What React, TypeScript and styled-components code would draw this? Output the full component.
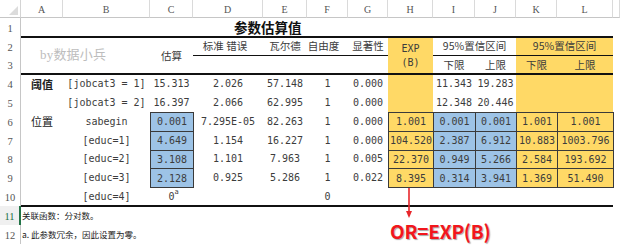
import React from 'react';
import styled, { createGlobalStyle, css } from 'styled-components';

const YELLOW = '#FFD966';
const BLUE = '#9DC3E6';
const INK = '#3c3c3c';
const LINE = '#3a3a3a';
const mono = `"DejaVu Sans Mono", "Liberation Mono", monospace`;
const cjk = `"Noto Sans CJK SC", "Noto Sans", sans-serif`;
const serif = `"Liberation Serif", serif`;

const Global = createGlobalStyle`
  html, body { margin: 0; padding: 0; background: #fff; }
  body { font-family: ${cjk}; }
`;

type Place = { $c: number; $r: number; $cs?: number; $rs?: number };
const place = css<Place>`
  grid-column: ${(p) => p.$c} / span ${(p) => p.$cs ?? 1};
  grid-row: ${(p) => p.$r} / span ${(p) => p.$rs ?? 1};
`;

const Sheet = styled.div`
  position: relative;
  width: 620px;
  height: 252px;
  overflow: hidden;
  display: grid;
  grid-template-columns: 21px 42px 87px 43px 70px 44px 41px 40px 45px 42px 41px 41px 56px 7px;
  grid-template-rows: 18px repeat(12, 18.8px) 1fr;
  background: #fff;
`;

const Corner = styled.div`
  grid-column: 1;
  grid-row: 1;
  border-right: 1px solid #d4d4d4;
  border-bottom: 1px solid #c6c6c6;
  display: flex;
  align-items: flex-end;
  justify-content: flex-end;
  padding: 0 2px 2px 0;
`;

const ColHead = styled.div<{ $c: number }>`
  grid-column: ${(p) => p.$c};
  grid-row: 1;
  display: flex;
  align-items: center;
  justify-content: center;
  border-right: 1px solid #dadada;
  border-bottom: 1px solid #c6c6c6;
  font: 10px ${serif};
  color: #555;
  padding-top: 2px;
`;

const RowHead = styled.div<{ $r: number; $active?: boolean }>`
  grid-column: 1;
  grid-row: ${(p) => p.$r};
  display: flex;
  align-items: center;
  justify-content: center;
  border-right: ${(p) => (p.$active ? '2px solid #217346' : '1px solid #c6c6c6')};
  font: 10.5px ${serif};
  color: ${(p) => (p.$active ? '#217346' : '#555')};
  background: ${(p) => (p.$active ? '#f0f0f0' : '#fff')};
  padding-top: 2px;
`;

type Fill = 'yellow' | 'blue' | undefined;
const Cell = styled.div<Place & { $fill?: Fill; $boxed?: boolean; $nudge?: number }>`
  ${place};
  display: flex;
  align-items: center;
  justify-content: center;
  white-space: nowrap;
  color: ${INK};
  padding-right: ${(p) => p.$nudge ?? 0}px;
  background: ${(p) => (p.$fill === 'yellow' ? YELLOW : p.$fill === 'blue' ? BLUE : 'transparent')};
  ${(p) =>
    p.$boxed &&
    css`
      border: 1px solid ${LINE};
      margin: 0 -1px -1px 0;
      z-index: 1;
    `}
`;

const Num = styled(Cell)`
  font: 10px ${mono};
`;

const Head = styled(Cell)`
  font: 10.5px ${cjk};
  flex-direction: column;
  line-height: 14px;
`;

const ExpHead = styled(Cell)`
  font: 10px ${mono};
  flex-direction: column;
  line-height: 14px;
`;

const Group = styled(Cell)<{ $strong?: boolean }>`
  font: ${(p) => (p.$strong ? 'bold' : 'normal')} 11px ${cjk};
  color: #222;
  justify-content: flex-start;
  padding-left: 10px;
`;

const Title = styled.div`
  grid-column: 2 / 14;
  grid-row: 2;
  display: flex;
  align-items: center;
  padding-left: 213px;
  font: bold 13.5px ${cjk};
  color: #111;
`;

const Note = styled.div<{ $r: number }>`
  grid-column: 2 / 14;
  grid-row: ${(p) => p.$r};
  display: flex;
  align-items: center;
  padding-left: 1px;
  font: 8.5px ${cjk};
  color: #222;
`;

const Rule = styled.div<{ $r: number; $from: number; $to: number; $w: number }>`
  grid-row: ${(p) => p.$r};
  grid-column: ${(p) => p.$from} / ${(p) => p.$to};
  align-self: end;
  height: ${(p) => p.$w}px;
  margin-bottom: ${(p) => (p.$w > 1 ? -1 : 0)}px;
  background: #111;
  z-index: 3;
`;

const Zero = styled.span`
  position: relative;
`;

const Sup = styled.span`
  position: absolute;
  left: 100%;
  top: -3px;
  font: 7px ${mono};
`;

const Watermark = styled.div`
  position: absolute;
  left: 40px;
  top: 44px;
  font: 13px ${serif}, ${cjk};
  color: #bdbdbd;
  letter-spacing: 0.2px;
`;

const Callout = styled.div`
  position: absolute;
  left: 390px;
  top: 188px;
  display: flex;
  flex-direction: column;
  align-items: flex-start;
  z-index: 5;
`;

const Arrow = styled.svg`
  margin-left: 14px;
  display: block;
`;

const CalloutText = styled.div`
  margin-top: 1px;
  font: bold 19px ${cjk};
  line-height: 22px;
  color: #f2161c;
  text-shadow: 1px 1px 1px rgba(0, 0, 0, 0.35);
  letter-spacing: -0.2px;
`;

const letters = ['A', 'B', 'C', 'D', 'E', 'F', 'G', 'H', 'I', 'J', 'K', 'L'];

type DataRow = {
  r: number;
  a?: string;
  strong?: boolean;
  b: string;
  v: string[];
  ci?: string[];
  exp?: string[];
};

const data: DataRow[] = [
  { r: 4, a: '阈值', strong: true, b: '[jobcat3 = 1]', v: ['15.313', '2.026', '57.148', '1', '0.000'], ci: ['11.343', '19.283'] },
  { r: 5, b: '[jobcat3 = 2]', v: ['16.397', '2.066', '62.995', '1', '0.000'], ci: ['12.348', '20.446'] },
  { r: 6, a: '位置', b: 'sabegin', v: ['0.001', '7.295E-05', '82.263', '1', '0.000'], exp: ['1.001', '0.001', '0.001', '1.001', '1.001'] },
  { r: 7, b: '[educ=1]', v: ['4.649', '1.154', '16.227', '1', '0.000'], exp: ['104.520', '2.387', '6.912', '10.883', '1003.796'] },
  { r: 8, b: '[educ=2]', v: ['3.108', '1.101', '7.963', '1', '0.005'], exp: ['22.370', '0.949', '5.266', '2.584', '193.692'] },
  { r: 9, b: '[educ=3]', v: ['2.128', '0.925', '5.286', '1', '0.022'], exp: ['8.395', '0.314', '3.941', '1.369', '51.490'] },
];

const expFill: Fill[] = ['yellow', 'blue', 'blue', 'yellow', 'yellow'];

export default function App() {
  return (
    <>
      <Global />
      <Sheet>
        <Corner>
          <svg width="9" height="9" viewBox="0 0 9 9">
            <polygon points="9,0 9,9 0,9" fill="#dcdcdc" />
          </svg>
        </Corner>
        {letters.map((l, i) => (
          <ColHead key={l} $c={i + 2}>
            {l}
          </ColHead>
        ))}
        <ColHead $c={14} />
        {Array.from({ length: 12 }, (_, i) => (
          <RowHead key={i} $r={i + 2} $active={i + 1 === 11}>
            {i + 1}
          </RowHead>
        ))}

        <Title>参数估算值</Title>

        <Head $c={4} $r={3} $rs={2}>
          估算
        </Head>
        <Head $c={5} $r={3} $nudge={6}>标准 错误</Head>
        <Head $c={6} $r={3}>瓦尔德</Head>
        <Head $c={7} $r={3} $nudge={8}>自由度</Head>
        <Head $c={8} $r={3}>显著性</Head>
        <ExpHead $c={9} $r={3} $rs={2} $fill="yellow">
          <span>EXP</span>
          <span>(B)</span>
        </ExpHead>
        <Head $c={10} $r={3} $cs={2}>95%置信区间</Head>
        <Head $c={12} $r={3} $cs={2} $fill="yellow">95%置信区间</Head>
        <Head $c={10} $r={4}>下限</Head>
        <Head $c={11} $r={4}>上限</Head>
        <Head $c={12} $r={4} $fill="yellow">下限</Head>
        <Head $c={13} $r={4} $fill="yellow">上限</Head>

        {data.map((row) => {
          const gr = row.r + 1;
          const boxedRow = !!row.exp;
          return (
            <React.Fragment key={row.r}>
              {row.a && (
                <Group $c={2} $r={gr} $strong={row.strong}>
                  {row.a}
                </Group>
              )}
              <Num $c={3} $r={gr}>{row.b}</Num>
              {row.v.map((v, i) => (
                <Num
                  key={i}
                  $c={4 + i}
                  $r={gr}
                  $fill={i === 0 && boxedRow ? 'blue' : undefined}
                  $boxed={i === 0 && boxedRow}
                >
                  {v}
                </Num>
              ))}
              {row.ci && (
                <>
                  <Num $c={9} $r={gr} $fill="yellow" />
                  <Num $c={10} $r={gr}>{row.ci[0]}</Num>
                  <Num $c={11} $r={gr}>{row.ci[1]}</Num>
                  <Num $c={12} $r={gr} $cs={2} $fill="yellow" />
                </>
              )}
              {row.exp &&
                row.exp.map((v, i) => (
                  <Num key={'e' + i} $c={9 + i} $r={gr} $fill={expFill[i]} $boxed>
                    {v}
                  </Num>
                ))}
            </React.Fragment>
          );
        })}

        <Num $c={3} $r={11}>[educ=4]</Num>
        <Num $c={4} $r={11}>
          <Zero>
            0<Sup>a</Sup>
          </Zero>
        </Num>
        <Num $c={7} $r={11}>0</Num>

        <Note $r={12}>关联函数：分对数。</Note>
        <Note $r={13}>a. 此参数冗余，因此设置为零。</Note>

        <Rule $r={2} $from={2} $to={14} $w={2} />
        <Rule $r={3} $from={5} $to={9} $w={1} />
        <Rule $r={3} $from={10} $to={14} $w={1} />
        <Rule $r={4} $from={2} $to={14} $w={2} />
        <Rule $r={11} $from={2} $to={14} $w={2} />

        <Watermark>by数据小兵</Watermark>

        <Callout>
          <Arrow width="10" height="31" viewBox="0 0 10 31">
            <line x1="5" y1="0" x2="5" y2="26" stroke="#e8262b" strokeWidth="1.6" />
            <polygon points="2,23 8,23 5,30" fill="#e8262b" />
          </Arrow>
          <CalloutText>OR=EXP(B)</CalloutText>
        </Callout>
      </Sheet>
    </>
  );
}
